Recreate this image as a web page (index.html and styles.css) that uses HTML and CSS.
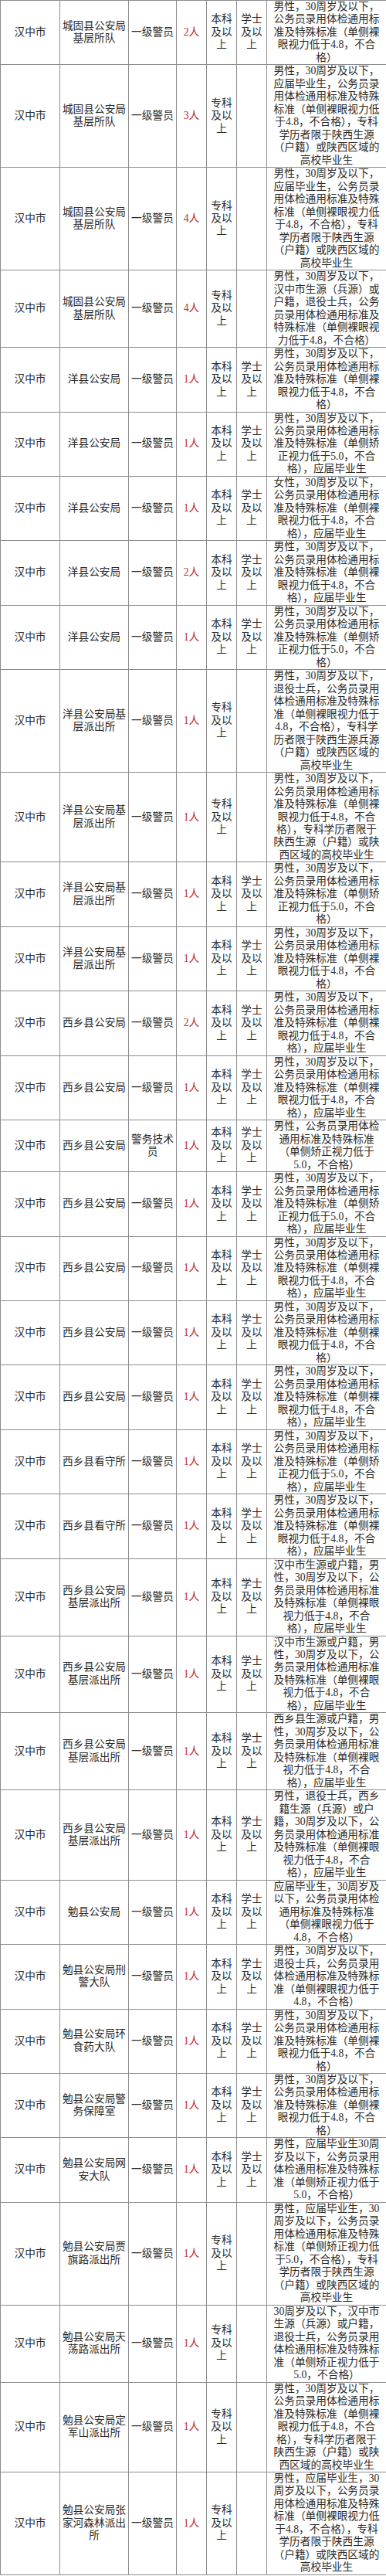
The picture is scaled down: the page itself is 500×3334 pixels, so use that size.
FILE: index.html
```html
<!DOCTYPE html>
<html lang="zh-CN">
<head>
<meta charset="utf-8">
<title>汉中市招录职位表</title>
<link rel="stylesheet" href="styles.css">
</head>
<body>
<table class="jobs">
<colgroup>
<col class="c-city"><col class="c-unit"><col class="c-pos"><col class="c-num"><col class="c-edu"><col class="c-deg"><col class="c-req">
</colgroup>
<tbody>
<tr><td>汉中市</td><td>城固县公安局<br>基层所队</td><td>一级警员</td><td class="num">2人</td><td>本科<br>及以<br>上</td><td>学士<br>及以<br>上</td><td class="req">男性，30周岁及以下，<br>公务员录用体检通用标<br>准及特殊标准（单侧裸<br>眼视力低于4.8，不合<br>格）</td></tr>
<tr><td>汉中市</td><td>城固县公安局<br>基层所队</td><td>一级警员</td><td class="num">3人</td><td>专科<br>及以<br>上</td><td></td><td class="req">男性，30周岁及以下，<br>应届毕业生，公务员录<br>用体检通用标准及特殊<br>标准（单侧裸眼视力低<br>于4.8，不合格），专科<br>学历者限于陕西生源<br>（户籍）或陕西区域的<br>高校毕业生</td></tr>
<tr><td>汉中市</td><td>城固县公安局<br>基层所队</td><td>一级警员</td><td class="num">4人</td><td>专科<br>及以<br>上</td><td></td><td class="req">男性，30周岁及以下，<br>应届毕业生，公务员录<br>用体检通用标准及特殊<br>标准（单侧裸眼视力低<br>于4.8，不合格），专科<br>学历者限于陕西生源<br>（户籍）或陕西区域的<br>高校毕业生</td></tr>
<tr><td>汉中市</td><td>城固县公安局<br>基层所队</td><td>一级警员</td><td class="num">4人</td><td>专科<br>及以<br>上</td><td></td><td class="req">男性，30周岁及以下，<br>汉中市生源（兵源）或<br>户籍，退役士兵，公务<br>员录用体检通用标准及<br>特殊标准（单侧裸眼视<br>力低于4.8，不合格）</td></tr>
<tr><td>汉中市</td><td>洋县公安局</td><td>一级警员</td><td class="num">1人</td><td>本科<br>及以<br>上</td><td>学士<br>及以<br>上</td><td class="req">男性，30周岁及以下，<br>公务员录用体检通用标<br>准及特殊标准（单侧裸<br>眼视力低于4.8，不合<br>格）</td></tr>
<tr><td>汉中市</td><td>洋县公安局</td><td>一级警员</td><td class="num">1人</td><td>本科<br>及以<br>上</td><td>学士<br>及以<br>上</td><td class="req">男性，30周岁及以下，<br>公务员录用体检通用标<br>准及特殊标准（单侧矫<br>正视力低于5.0，不合<br>格），应届毕业生</td></tr>
<tr><td>汉中市</td><td>洋县公安局</td><td>一级警员</td><td class="num">1人</td><td>本科<br>及以<br>上</td><td>学士<br>及以<br>上</td><td class="req">女性，30周岁及以下，<br>公务员录用体检通用标<br>准及特殊标准（单侧裸<br>眼视力低于4.8，不合<br>格），应届毕业生</td></tr>
<tr><td>汉中市</td><td>洋县公安局</td><td>一级警员</td><td class="num">2人</td><td>本科<br>及以<br>上</td><td>学士<br>及以<br>上</td><td class="req">男性，30周岁及以下，<br>公务员录用体检通用标<br>准及特殊标准（单侧裸<br>眼视力低于4.8，不合<br>格），应届毕业生</td></tr>
<tr><td>汉中市</td><td>洋县公安局</td><td>一级警员</td><td class="num">1人</td><td>本科<br>及以<br>上</td><td>学士<br>及以<br>上</td><td class="req">男性，30周岁及以下，<br>公务员录用体检通用标<br>准及特殊标准（单侧矫<br>正视力低于5.0，不合<br>格）</td></tr>
<tr><td>汉中市</td><td>洋县公安局基<br>层派出所</td><td>一级警员</td><td class="num">1人</td><td>专科<br>及以<br>上</td><td></td><td class="req">男性，30周岁及以下，<br>退役士兵，公务员录用<br>体检通用标准及特殊标<br>准（单侧裸眼视力低于<br>4.8，不合格），专科学<br>历者限于陕西生源兵源<br>（户籍）或陕西区域的<br>高校毕业生</td></tr>
<tr><td>汉中市</td><td>洋县公安局基<br>层派出所</td><td>一级警员</td><td class="num">1人</td><td>专科<br>及以<br>上</td><td></td><td class="req">男性，30周岁及以下，<br>公务员录用体检通用标<br>准及特殊标准（单侧裸<br>眼视力低于4.8，不合<br>格），专科学历者限于<br>陕西生源（户籍）或陕<br>西区域的高校毕业生</td></tr>
<tr><td>汉中市</td><td>洋县公安局基<br>层派出所</td><td>一级警员</td><td class="num">1人</td><td>本科<br>及以<br>上</td><td>学士<br>及以<br>上</td><td class="req">男性，30周岁及以下，<br>公务员录用体检通用标<br>准及特殊标准（单侧矫<br>正视力低于5.0，不合<br>格）</td></tr>
<tr><td>汉中市</td><td>洋县公安局基<br>层派出所</td><td>一级警员</td><td class="num">1人</td><td>本科<br>及以<br>上</td><td>学士<br>及以<br>上</td><td class="req">男性，30周岁及以下，<br>公务员录用体检通用标<br>准及特殊标准（单侧裸<br>眼视力低于4.8，不合<br>格）</td></tr>
<tr><td>汉中市</td><td>西乡县公安局</td><td>一级警员</td><td class="num">2人</td><td>本科<br>及以<br>上</td><td>学士<br>及以<br>上</td><td class="req">男性，30周岁及以下，<br>公务员录用体检通用标<br>准及特殊标准（单侧裸<br>眼视力低于4.8，不合<br>格），应届毕业生</td></tr>
<tr><td>汉中市</td><td>西乡县公安局</td><td>一级警员</td><td class="num">1人</td><td>本科<br>及以<br>上</td><td>学士<br>及以<br>上</td><td class="req">男性，30周岁及以下，<br>公务员录用体检通用标<br>准及特殊标准（单侧裸<br>眼视力低于4.8，不合<br>格），应届毕业生</td></tr>
<tr><td>汉中市</td><td>西乡县公安局</td><td>警务技术<br>员</td><td class="num">1人</td><td>本科<br>及以<br>上</td><td>学士<br>及以<br>上</td><td class="req">男性，公务员录用体检<br>通用标准及特殊标准<br>（单侧矫正视力低于<br>5.0，不合格）</td></tr>
<tr><td>汉中市</td><td>西乡县公安局</td><td>一级警员</td><td class="num">1人</td><td>本科<br>及以<br>上</td><td>学士<br>及以<br>上</td><td class="req">男性，30周岁及以下，<br>公务员录用体检通用标<br>准及特殊标准（单侧矫<br>正视力低于5.0，不合<br>格），应届毕业生</td></tr>
<tr><td>汉中市</td><td>西乡县公安局</td><td>一级警员</td><td class="num">1人</td><td>本科<br>及以<br>上</td><td>学士<br>及以<br>上</td><td class="req">男性，30周岁及以下，<br>公务员录用体检通用标<br>准及特殊标准（单侧裸<br>眼视力低于4.8，不合<br>格），应届毕业生</td></tr>
<tr><td>汉中市</td><td>西乡县公安局</td><td>一级警员</td><td class="num">1人</td><td>本科<br>及以<br>上</td><td>学士<br>及以<br>上</td><td class="req">男性，30周岁及以下，<br>公务员录用体检通用标<br>准及特殊标准（单侧裸<br>眼视力低于4.8，不合<br>格）</td></tr>
<tr><td>汉中市</td><td>西乡县公安局</td><td>一级警员</td><td class="num">1人</td><td>本科<br>及以<br>上</td><td>学士<br>及以<br>上</td><td class="req">男性，30周岁及以下，<br>公务员录用体检通用标<br>准及特殊标准（单侧裸<br>眼视力低于4.8，不合<br>格），应届毕业生</td></tr>
<tr><td>汉中市</td><td>西乡县看守所</td><td>一级警员</td><td class="num">1人</td><td>本科<br>及以<br>上</td><td>学士<br>及以<br>上</td><td class="req">男性，30周岁及以下，<br>公务员录用体检通用标<br>准及特殊标准（单侧矫<br>正视力低于5.0，不合<br>格），应届毕业生</td></tr>
<tr><td>汉中市</td><td>西乡县看守所</td><td>一级警员</td><td class="num">1人</td><td>本科<br>及以<br>上</td><td>学士<br>及以<br>上</td><td class="req">男性，30周岁及以下，<br>公务员录用体检通用标<br>准及特殊标准（单侧裸<br>眼视力低于4.8，不合<br>格），应届毕业生</td></tr>
<tr><td>汉中市</td><td>西乡县公安局<br>基层派出所</td><td>一级警员</td><td class="num">1人</td><td>本科<br>及以<br>上</td><td>学士<br>及以<br>上</td><td class="req">汉中市生源或户籍，男<br>性，30周岁及以下，公<br>务员录用体检通用标准<br>及特殊标准（单侧裸眼<br>视力低于4.8，不合<br>格），应届毕业生</td></tr>
<tr><td>汉中市</td><td>西乡县公安局<br>基层派出所</td><td>一级警员</td><td class="num">1人</td><td>本科<br>及以<br>上</td><td>学士<br>及以<br>上</td><td class="req">汉中市生源或户籍，男<br>性，30周岁及以下，公<br>务员录用体检通用标准<br>及特殊标准（单侧裸眼<br>视力低于4.8，不合<br>格），应届毕业生</td></tr>
<tr><td>汉中市</td><td>西乡县公安局<br>基层派出所</td><td>一级警员</td><td class="num">1人</td><td>本科<br>及以<br>上</td><td>学士<br>及以<br>上</td><td class="req">西乡县生源或户籍，男<br>性，30周岁及以下，公<br>务员录用体检通用标准<br>及特殊标准（单侧裸眼<br>视力低于4.8，不合<br>格），应届毕业生</td></tr>
<tr><td>汉中市</td><td>西乡县公安局<br>基层派出所</td><td>一级警员</td><td class="num">1人</td><td>本科<br>及以<br>上</td><td>学士<br>及以<br>上</td><td class="req">男性，退役士兵，西乡<br>籍生源（兵源）或户<br>籍，30周岁及以下，公<br>务员录用体检通用标准<br>及特殊标准（单侧裸眼<br>视力低于4.8，不合<br>格），应届毕业生</td></tr>
<tr><td>汉中市</td><td>勉县公安局</td><td>一级警员</td><td class="num">1人</td><td>本科<br>及以<br>上</td><td>学士<br>及以<br>上</td><td class="req">应届毕业生，30周岁及<br>以下，公务员录用体检<br>通用标准及特殊标准<br>（单侧裸眼视力低于<br>4.8，不合格）</td></tr>
<tr><td>汉中市</td><td>勉县公安局刑<br>警大队</td><td>一级警员</td><td class="num">1人</td><td>本科<br>及以<br>上</td><td>学士<br>及以<br>上</td><td class="req">男性，30周岁及以下，<br>退役士兵，公务员录用<br>体检通用标准及特殊标<br>准（单侧裸眼视力低于<br>4.8，不合格）</td></tr>
<tr><td>汉中市</td><td>勉县公安局环<br>食药大队</td><td>一级警员</td><td class="num">1人</td><td>本科<br>及以<br>上</td><td>学士<br>及以<br>上</td><td class="req">男性，30周岁及以下，<br>公务员录用体检通用标<br>准及特殊标准（单侧裸<br>眼视力低于4.8，不合<br>格）</td></tr>
<tr><td>汉中市</td><td>勉县公安局警<br>务保障室</td><td>一级警员</td><td class="num">1人</td><td>本科<br>及以<br>上</td><td>学士<br>及以<br>上</td><td class="req">男性，30周岁及以下，<br>公务员录用体检通用标<br>准及特殊标准（单侧裸<br>眼视力低于4.8，不合<br>格）</td></tr>
<tr><td>汉中市</td><td>勉县公安局网<br>安大队</td><td>一级警员</td><td class="num">1人</td><td>本科<br>及以<br>上</td><td>学士<br>及以<br>上</td><td class="req">男性，应届毕业生30周<br>岁及以下，公务员录用<br>体检通用标准及特殊标<br>准（单侧矫正视力低于<br>5.0，不合格）</td></tr>
<tr><td>汉中市</td><td>勉县公安局贾<br>旗路派出所</td><td>一级警员</td><td class="num">1人</td><td>专科<br>及以<br>上</td><td></td><td class="req">男性，应届毕业生，30<br>周岁及以下，公务员录<br>用体检通用标准及特殊<br>标准（单侧矫正视力低<br>于5.0，不合格），专科<br>学历者限于陕西生源<br>（户籍）或陕西区域的<br>高校毕业生</td></tr>
<tr><td>汉中市</td><td>勉县公安局天<br>荡路派出所</td><td>一级警员</td><td class="num">1人</td><td>专科<br>及以<br>上</td><td></td><td class="req">30周岁及以下，汉中市<br>生源（兵源）或户籍，<br>退役士兵，公务员录用<br>体检通用标准及特殊标<br>准（单侧矫正视力低于<br>5.0，不合格）</td></tr>
<tr><td>汉中市</td><td>勉县公安局定<br>军山派出所</td><td>一级警员</td><td class="num">1人</td><td>专科<br>及以<br>上</td><td></td><td class="req">男性，30周岁及以下，<br>公务员录用体检通用标<br>准及特殊标准（单侧裸<br>眼视力低于4.8，不合<br>格），专科学历者限于<br>陕西生源（户籍）或陕<br>西区域的高校毕业生</td></tr>
<tr><td>汉中市</td><td>勉县公安局张<br>家河森林派出<br>所</td><td>一级警员</td><td class="num">1人</td><td>专科<br>及以<br>上</td><td></td><td class="req">男性，应届毕业生，30<br>周岁及以下，公务员录<br>用体检通用标准及特殊<br>标准（单侧裸眼视力低<br>于4.8，不合格），专科<br>学历者限于陕西生源<br>（户籍）或陕西区域的<br>高校毕业生</td></tr>
</tbody>
</table>
</body>
</html>
```
FILE: styles.css
```css
html, body {
  margin: 0;
  padding: 0;
  background: #ffffff;
}

.jobs {
  width: 500px;
  border-collapse: collapse;
  table-layout: fixed;
  font-family: "Liberation Serif", "Noto Sans CJK SC", serif;
  font-size: 13.7px;
  line-height: 16.49px;
  color: #2a2a2a;
}

.c-city { width: 77px; }
.c-unit { width: 89px; }
.c-pos { width: 62px; }
.c-num { width: 39px; }
.c-edu { width: 39px; }
.c-deg { width: 39px; }
.c-req { width: 155px; }

.jobs td {
  border: 1px solid #8c8c8c;
  padding: 0;
  text-align: center;
  vertical-align: middle;
  white-space: nowrap;
}

.jobs td.num {
  color: #c0282a;
}

.jobs td.req {
  overflow: visible;
}
```
